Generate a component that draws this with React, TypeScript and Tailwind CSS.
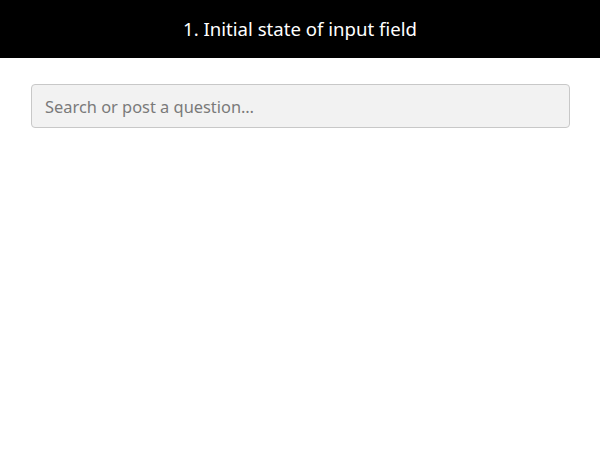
export default function App() {
  return (
    <div className="min-h-[465px] bg-white" style={{ fontFamily: "'Noto Sans', sans-serif" }}>
      <div className="h-[58px] bg-black flex items-center justify-center">
        <h1 className="text-white text-[18.6px] leading-none font-normal">1. Initial state of input field</h1>
      </div>
      <div className="pl-[31px] pr-[30px] pt-[26px]">
        <input
          type="text"
          placeholder="Search or post a question…"
          className="w-full h-[44px] rounded-[4px] border border-[#c8c8c8] bg-[#f2f2f2] px-[13px] text-[16.4px] text-[#555] placeholder:text-[#7a7a7a] outline-none"
        />
      </div>
    </div>
  );
}
